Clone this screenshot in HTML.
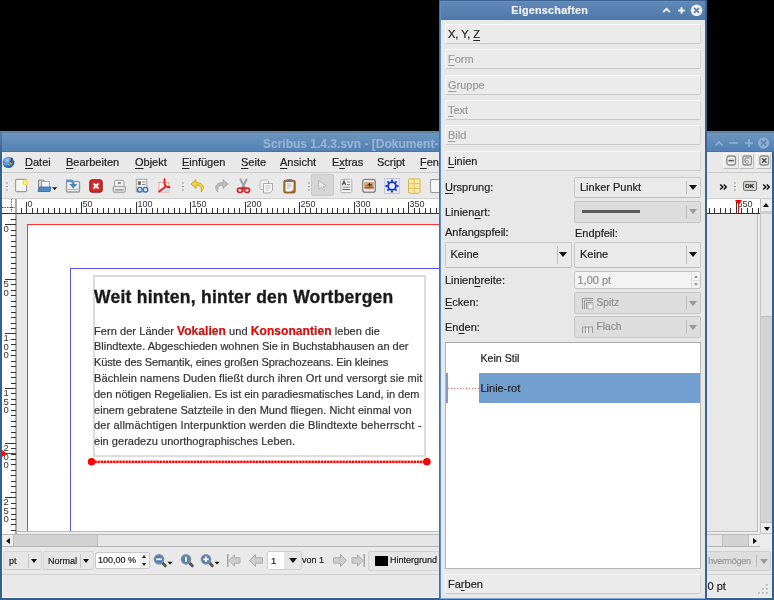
<!DOCTYPE html>
<html><head><meta charset="utf-8">
<style>
*{margin:0;padding:0;box-sizing:border-box}
html,body{width:774px;height:600px;overflow:hidden;background:#000;font-family:"Liberation Sans",sans-serif;font-size:11px;color:#222;-webkit-text-stroke:0.2px currentColor}
.a{position:absolute}
u{text-decoration:underline;text-decoration-thickness:1px;text-underline-offset:1.5px}
.t{position:absolute;white-space:nowrap;line-height:1}
/* main window */
#main{left:0;top:131px;width:774px;height:469px;background:#e9e9e9;border-left:2px solid #33608f;border-right:2px solid #33608f;border-bottom:2px solid #33608f;box-shadow:inset 1px -1px 0 #f7f5f1}
#mtitle{left:0;top:131px;width:774px;height:21px;background:linear-gradient(#7097c1,#5180b2)}
.mi{position:absolute;top:157px;font-size:11px;color:#222;line-height:1}
.hl{position:absolute;height:1px;background:#cbcbcb}
.btn{position:absolute;background:#e9e9e9;border:1px solid #d4d4d4;border-radius:2px}
/* properties */
#props{left:439px;top:0;width:268px;height:600px;background:#e9e9e9;border:2px solid #4a74a4;border-top:0;border-bottom:2px solid #4a74a4}
#ptitle{left:439px;top:0;width:268px;height:20px;background:linear-gradient(#6b93c1,#4e79aa);border-radius:3px 3px 0 0}
.pb{position:absolute;left:445px;width:256px;height:20px;background:#ebebeb;border:1px solid #f6f6f6;border-bottom-color:#c9c9c9;border-right-color:#d6d6d6;border-radius:2px;box-shadow:inset 0 0 0 0 #000}
.pb span{position:absolute;left:2px;top:3.5px;line-height:1;white-space:nowrap}
.dcombo{background:#dddddd !important;border-color:#c6c6c6 !important}
.dis{color:#999}
.lbl{position:absolute;left:445px;font-size:11px;color:#222;line-height:1}
.combo{position:absolute;background:#eaeaea;border:1px solid #c8c8c8;border-bottom-color:#bcbcbc;border-radius:2px}
.combo .sep{position:absolute;top:3px;bottom:3px;width:1px;background:#bdbdbd}
.arr{position:absolute;width:0;height:0;border-left:4px solid transparent;border-right:4px solid transparent;border-top:5px solid #111}
</style></head><body>
<body><div id="wrap" style="position:absolute;left:0;top:0;width:774px;height:600px;will-change:transform">
<!-- MAIN WINDOW -->
<div id="main" class="a"></div>
<div id="mtitle" class="a"></div>
<div class="a" style="left:0;top:131px;width:774px;height:1px;background:#6a87a6"></div>
<div class="a" style="left:0;top:132px;width:774px;height:1px;background:#62809f"></div>
<div class="a" style="left:0;top:151px;width:774px;height:1px;background:#4875a8"></div>
<div class="a" style="left:0;top:132px;width:2px;height:20px;background:linear-gradient(#5e7fa3,#3d6692)"></div>
<div class="t" style="left:263px;top:137.5px;font-weight:bold;font-size:12px;color:#98b4d6;-webkit-text-stroke:0.1px #98b4d6">Scribus 1.4.3.svn - [Dokument-1]</div>
<svg class="a" style="left:705px;top:131px" width="69" height="21" viewBox="0 0 69 21"><path d="M10.5 14.5 L14 11 L17.5 14.5" fill="none" stroke="#8fb0d4" stroke-width="1.7"/><path d="M24.5 12 H33" stroke="#8fb0d4" stroke-width="1.7"/><path d="M40 12 H48 M44 8 V16" stroke="#8fb0d4" stroke-width="1.7"/><circle cx="58.6" cy="12" r="5.6" fill="#8fb0d4"/><path d="M56 9.4 L61.2 14.6 M61.2 9.4 L56 14.6" stroke="#5d86b6" stroke-width="1.6"/></svg>
<div class="hl" style="left:2px;top:172px;width:770px"></div>
<svg class="a" style="left:2px;top:156px" width="14" height="14" viewBox="0 0 14 14"><defs><radialGradient id="gl" cx="0.4" cy="0.3" r="0.75"><stop offset="0" stop-color="#a8d0f0"/><stop offset="0.55" stop-color="#3a7fc0"/><stop offset="1" stop-color="#1d5a98"/></radialGradient></defs><circle cx="6.3" cy="6.4" r="5.7" fill="url(#gl)"/><path d="M1.5 7.5 Q5 10 11 7" fill="none" stroke="#9cc4e6" stroke-width="1" opacity="0.7"/><path d="M10.3 1.8 L7.6 8.8" stroke="#3a3a3a" stroke-width="1.3"/><path d="M8.6 6.2 L7.3 9.8" stroke="#c8a54a" stroke-width="1.1"/><path d="M12 5 L11 9" stroke="#0e3560" stroke-width="1.5" opacity="0.6"/></svg>
<div class="mi" style="left:25px"><u>D</u>atei</div>
<div class="mi" style="left:66px"><u>B</u>earbeiten</div>
<div class="mi" style="left:135px"><u>O</u>bjekt</div>
<div class="mi" style="left:182px"><u>E</u>infügen</div>
<div class="mi" style="left:241px"><u>S</u>eite</div>
<div class="mi" style="left:280px"><u>A</u>nsicht</div>
<div class="mi" style="left:332px">E<u>x</u>tras</div>
<div class="mi" style="left:377px">Scr<u>i</u>pt</div>
<div class="mi" style="left:420px"><u>F</u>enster</div>
<div class="a" style="left:723px;top:153px;width:16px;height:16px;background:#ebebeb;border:1px solid #f8f8f8;border-right-color:#c6c6c6;border-bottom-color:#bdbdbd"></div>
<svg class="a" style="left:726px;top:155px" width="11" height="12"><rect x="0.9" y="1" width="8.6" height="9" rx="2.2" fill="none" stroke="#8c8c8c" stroke-width="1.3"/><path d="M2.6 5.6 H7.8" stroke="#555" stroke-width="1.6"/></svg>
<div class="a" style="left:739px;top:153px;width:15px;height:16px;background:#ebebeb;border:1px solid #f8f8f8;border-right-color:#c6c6c6;border-bottom-color:#bdbdbd"></div>
<svg class="a" style="left:742px;top:155px" width="11" height="12"><rect x="0.9" y="1" width="8.6" height="9" rx="1.8" fill="none" stroke="#8c8c8c" stroke-width="1.3"/><path d="M3 7.5 V4 Q3 3 4 3 H7.5" fill="none" stroke="#777" stroke-width="1"/><circle cx="5" cy="7" r="1.5" fill="#f2f2f2" stroke="#888" stroke-width="0.8"/></svg>
<div class="a" style="left:756px;top:153px;width:15px;height:16px;background:#ebebeb;border:1px solid #f8f8f8;border-right-color:#c6c6c6;border-bottom-color:#bdbdbd"></div>
<svg class="a" style="left:759px;top:155px" width="11" height="12"><rect x="0.9" y="1" width="8.6" height="9" rx="1.8" fill="none" stroke="#8c8c8c" stroke-width="1.3"/><path d="M3 3.3 L7.4 7.7 M7.4 3.3 L3 7.7" stroke="#4a4a4a" stroke-width="1.5"/></svg>
<div class="hl" style="left:2px;top:198px;width:770px;background:#d0d0d0"></div>
<svg class="a" style="left:5px;top:180px" width="5" height="14"><g fill="#fafafa"><circle cx="2.7" cy="3.7" r="0.9"/><circle cx="2.7" cy="7.2" r="0.9"/><circle cx="2.7" cy="10.7" r="0.9"/></g><g fill="#8e8e8e"><circle cx="2" cy="3" r="0.85"/><circle cx="2" cy="6.5" r="0.85"/><circle cx="2" cy="10" r="0.85"/></g></svg>
<svg class="a" style="left:181px;top:180px" width="5" height="14"><g fill="#fafafa"><circle cx="2.7" cy="3.7" r="0.9"/><circle cx="2.7" cy="7.2" r="0.9"/><circle cx="2.7" cy="10.7" r="0.9"/></g><g fill="#8e8e8e"><circle cx="2" cy="3" r="0.85"/><circle cx="2" cy="6.5" r="0.85"/><circle cx="2" cy="10" r="0.85"/></g></svg>
<svg class="a" style="left:307px;top:180px" width="5" height="14"><g fill="#fafafa"><circle cx="2.7" cy="3.7" r="0.9"/><circle cx="2.7" cy="7.2" r="0.9"/><circle cx="2.7" cy="10.7" r="0.9"/></g><g fill="#8e8e8e"><circle cx="2" cy="3" r="0.85"/><circle cx="2" cy="6.5" r="0.85"/><circle cx="2" cy="10" r="0.85"/></g></svg>
<svg class="a" style="left:733px;top:180px" width="5" height="14"><g fill="#fafafa"><circle cx="2.7" cy="3.7" r="0.9"/><circle cx="2.7" cy="7.2" r="0.9"/><circle cx="2.7" cy="10.7" r="0.9"/></g><g fill="#8e8e8e"><circle cx="2" cy="3" r="0.85"/><circle cx="2" cy="6.5" r="0.85"/><circle cx="2" cy="10" r="0.85"/></g></svg>
<svg class="a" style="left:14px;top:178px" width="16" height="16"><rect x="1.6" y="1.4" width="11" height="12.2" rx="1" fill="#f4f4f4" stroke="#9a9a9a" stroke-width="1.1"/><circle cx="11.2" cy="4.4" r="2.9" fill="#efe84a"/><circle cx="11.2" cy="4.4" r="1.3" fill="#fffbb0"/></svg>
<svg class="a" style="left:37px;top:178px" width="22" height="16"><path d="M1.5 13 V2 H6.5 L8 3.5 H9.5 V8" fill="#cfcfcf" stroke="#8a8a8a"/><rect x="4.5" y="3.5" width="8" height="6" fill="#f6f6f6" stroke="#9a9a9a" stroke-width="0.8"/><path d="M5 9.5 H6.5" stroke="#bbb"/><path d="M2.5 9 H14 L13 13.5 H1 Z" fill="#5289c8" stroke="#3a6ca8" stroke-width="0.9"/><path d="M15.2 9.3 H20.2 L17.7 12 Z" fill="#111"/></svg>
<svg class="a" style="left:65px;top:178px" width="16" height="16"><rect x="1.5" y="3.5" width="13" height="10.5" rx="1.2" fill="#f2f2f2" stroke="#9a9a9a" stroke-width="1.4"/><path d="M2.5 11.5 H13.5" stroke="#b5b5b5" stroke-width="1.2"/><path d="M1 2.8 H5.5 Q8.3 2.8 8.3 6.5" fill="none" stroke="#5a92c8" stroke-width="2.6"/><path d="M4.3 6 H12.3 L8.3 10.5 Z" fill="#4a86c0"/></svg>
<svg class="a" style="left:89px;top:179px" width="15" height="15"><rect x="0.8" y="0.8" width="12.4" height="12.4" rx="2" fill="#d42a2a" stroke="#8e1414"/><path d="M4.5 4.5 L9.5 9.5 M9.5 4.5 L4.5 9.5" stroke="#fff" stroke-width="1.8"/></svg>
<svg class="a" style="left:112px;top:178px" width="15" height="16"><rect x="2.5" y="2.3" width="9.5" height="6.5" rx="1.2" fill="#f2f2f2" stroke="#9c9c9c" stroke-width="1"/><path d="M5.8 5 H8.8" stroke="#7a7a7a" stroke-width="1.6"/><rect x="1.3" y="8.3" width="12" height="6" rx="1.2" fill="#e2e2e2" stroke="#9a9a9a" stroke-width="1.1"/><path d="M3 11.8 H11.5" stroke="#8a8a8a" stroke-width="1.2"/><path d="M3 10.3 H11.5" stroke="#fafafa" stroke-width="0.8"/></svg>
<svg class="a" style="left:135px;top:178px" width="15" height="16"><rect x="1.3" y="1.3" width="10.5" height="12.5" fill="#f6f6f6" stroke="#a5a5a5" stroke-width="1"/><rect x="2.8" y="3.3" width="3.2" height="3.6" fill="#6e6e6e"/><path d="M7 4 H10.5 M7 6.5 H10.5" stroke="#8a8a8a" stroke-width="1"/><path d="M2.5 9 H10.5" stroke="#d0d0d0" stroke-width="1"/><circle cx="4.8" cy="11.7" r="2.3" fill="#dfe9f5" stroke="#3f74b8" stroke-width="1.4"/><circle cx="10.5" cy="11.7" r="2.3" fill="#dfe9f5" stroke="#3f74b8" stroke-width="1.4"/><path d="M7 11.7 H8.3" stroke="#3f74b8" stroke-width="1.2"/></svg>
<svg class="a" style="left:155px;top:176px" width="18" height="18"><rect x="4" y="6.5" width="9.8" height="9.6" fill="#f4f4f4" stroke="#e0a0a0" stroke-width="0.9"/><path d="M7.5 16 Q11 11.5 13.8 11.5 V16 Z" fill="#c8dcea"/><path d="M9.6 3.2 Q9.2 8.5 10.8 10.5 L14.6 11.3 M10.8 10.5 Q7.5 13 4.2 15.6" fill="none" stroke="#f01818" stroke-width="1.9" stroke-linecap="round"/></svg>
<svg class="a" style="left:190px;top:178px" width="16" height="16"><path d="M6 1.5 L1 6 L6 10.5 V7.5 C10 7 12 9 11 14 C14.5 11 15 5 6 4.5 Z" fill="#f0d23a" stroke="#c4a21a" stroke-width="0.8"/></svg>
<svg class="a" style="left:213px;top:178px" width="16" height="16"><path d="M10 1.5 L15 6 L10 10.5 V7.5 C6 7 4 9 5 14 C1.5 11 1 5 10 4.5 Z" fill="#bdbdbd" stroke="#a5a5a5" stroke-width="0.8"/></svg>
<svg class="a" style="left:236px;top:178px" width="15" height="16"><path d="M4.5 1.5 L8.8 10 M10.5 1.5 L6.2 10" stroke="#a0a0a0" stroke-width="2" stroke-linecap="round"/><path d="M7.5 9.5 L5 11" stroke="#c02020" stroke-width="1.5"/><path d="M7.5 9.5 L10 11" stroke="#c02020" stroke-width="1.5"/><ellipse cx="4" cy="12.3" rx="2.6" ry="2.2" fill="none" stroke="#d82020" stroke-width="1.7"/><ellipse cx="11" cy="12.3" rx="2.6" ry="2.2" fill="none" stroke="#d82020" stroke-width="1.7"/></svg>
<svg class="a" style="left:259px;top:179px" width="15" height="15"><rect x="1" y="1" width="8.5" height="9.5" rx="1" fill="#efefef" stroke="#bdbdbd"/><path d="M4.5 4.5 H13.5 V11.5 L11 14 H4.5 Z" fill="#f4f4f4" stroke="#ababab"/><path d="M6.5 7 H11.5 M6.5 9 H11.5 M6.5 11 H9.5" stroke="#c8c8c8"/></svg>
<svg class="a" style="left:282px;top:178px" width="15" height="16"><rect x="1.8" y="2.3" width="11.4" height="12.7" rx="1.5" fill="#a46f28" stroke="#7a5018" stroke-width="0.8"/><path d="M3.5 4 H11.5 V11.5 L9 13.5 H3.5 Z" fill="#f4f4f4"/><rect x="4.8" y="1" width="5.4" height="2.8" rx="1" fill="#777"/><path d="M5 6 H9 M5 8 H10 M5 10 H8" stroke="#b5b5b5"/></svg>
<div class="a" style="left:311px;top:174px;width:23px;height:22px;background:#d6d6d6;border:1px solid #c8c8c8;border-radius:2px"></div>
<svg class="a" style="left:315px;top:178px" width="15" height="15"><path d="M3.5 2.5 L11.5 8 L8 8.5 L10 12 L8.5 12.8 L6.5 9.3 L3.8 11.5 Z" fill="#e8e8e8" stroke="#b5b5b5" stroke-width="0.9"/></svg>
<svg class="a" style="left:339px;top:178px" width="15" height="16"><rect x="1.8" y="1.3" width="11" height="13.3" rx="1.3" fill="#f7f7f7" stroke="#b0b0b0" stroke-width="1"/><path d="M3.3 7 L5 2.8 L6.6 7 M3.9 5.6 H6" fill="none" stroke="#555" stroke-width="1.2"/><path d="M7.8 4 H11 M7.8 6.5 H11" stroke="#8a8a8a" stroke-width="1"/><path d="M3.3 9.2 H11.3" stroke="#b5b5b5" stroke-width="1.6"/><path d="M3.3 11.6 H11.3" stroke="#555" stroke-width="1"/></svg>
<svg class="a" style="left:361px;top:178px" width="16" height="16"><rect x="1.7" y="1.6" width="12.6" height="12.6" rx="2.2" fill="#f4f4f4" stroke="#8a8a8a" stroke-width="1.5"/><rect x="3.5" y="4" width="9" height="6.5" rx="0.8" fill="#b78a5a"/><rect x="3.5" y="4" width="9" height="3" fill="#c9a070"/><rect x="3.5" y="9" width="9" height="1.5" fill="#d24a2a"/><path d="M6.5 6.8 H11 M8.5 5 V8.5" stroke="#3a2a20" stroke-width="1"/><circle cx="5" cy="5.3" r="0.9" fill="#c8e040"/><path d="M3.5 11.8 H12.5" stroke="#cfcfcf" stroke-width="0.8"/></svg>
<svg class="a" style="left:384px;top:178px" width="16" height="16"><rect x="0.5" y="0.5" width="15" height="15" fill="none" stroke="#7c95e0" stroke-dasharray="1 1" stroke-width="0.8"/><circle cx="8" cy="8" r="3.9" fill="none" stroke="#1a3ad8" stroke-width="1.9"/><path d="M8 1.5 V3.8 M8 12.2 V14.5 M1.5 8 H3.8 M12.2 8 H14.5 M3.4 3.4 L5 5 M11 11 L12.6 12.6 M12.6 3.4 L11 5 M5 11 L3.4 12.6" stroke="#1a3ad8" stroke-width="1.8"/></svg>
<svg class="a" style="left:407px;top:178px" width="15" height="16"><rect x="1.5" y="0.8" width="11.5" height="14.4" rx="1.5" fill="#f8eba8" stroke="#d2b44a"/><path d="M7.25 1 V15 M1.5 5.6 H13 M1.5 10.4 H13" stroke="#d8bd5a" stroke-width="0.9"/></svg>
<div class="a" style="left:430px;top:179px;width:9px;height:14px;background:#f6f6f6;border:1px solid #999;border-right:0;border-radius:2px 0 0 2px"></div>
<svg class="a" style="left:719px;top:183px" width="10" height="8"><path d="M1.2 1.5 L3.8 4 L1.2 6.5 M4.7 1.5 L7.3 4 L4.7 6.5" fill="none" stroke="#111" stroke-width="1.5"/></svg>
<svg class="a" style="left:762px;top:183px" width="10" height="8"><path d="M1.2 1.5 L3.8 4 L1.2 6.5 M4.7 1.5 L7.3 4 L4.7 6.5" fill="none" stroke="#111" stroke-width="1.5"/></svg>
<div class="a" style="left:743px;top:181px;width:14px;height:10px;background:#d4d4d0;border:1px solid #777;border-radius:2px"></div>
<div class="t" style="left:745px;top:183px;font-weight:bold;font-size:6px;color:#222">OK</div>
<div class="a" style="left:2px;top:199px;width:758px;height:15px;background:#fff"></div>
<div class="a" style="left:2px;top:214px;width:15px;height:320px;background:#fff"></div>
<div class="a" style="left:17px;top:214px;width:743px;height:317px;background:#e8e8e8;overflow:hidden"><div class="a" style="left:10px;top:10px;width:640px;height:400px;background:#fff;border-left:1px solid #f33;border-top:1px solid #f33"></div><div class="a" style="left:53px;top:54px;width:560px;height:400px;border-left:1px solid #55f;border-top:1px solid #55f"></div></div>
<div class="a" style="left:757px;top:214px;width:1px;height:317px;background:#c6c6c6"></div>
<svg class="a" style="left:0;top:0" width="774" height="600"><path d="M2 213.5 H760" stroke="#333" stroke-width="1"/><path d="M16 199 V534" stroke="#555" stroke-width="1"/><path d="M2 207.5 H15 M11.5 199 V212" stroke="#555" stroke-width="1" stroke-dasharray="1.5 1"/><path d="M21.5 208 V213 M26.5 202 V213 M32.5 208 V213 M37.5 208 V213 M43.5 208 V213 M48.5 208 V213 M54.5 208 V213 M59.5 208 V213 M65.5 208 V213 M70.5 208 V213 M76.5 208 V213 M81.5 202 V213 M86.5 208 V213 M92.5 208 V213 M97.5 208 V213 M103.5 208 V213 M108.5 208 V213 M114.5 208 V213 M119.5 208 V213 M125.5 208 V213 M130.5 208 V213 M136.5 202 V213 M141.5 208 V213 M146.5 208 V213 M152.5 208 V213 M157.5 208 V213 M163.5 208 V213 M168.5 208 V213 M174.5 208 V213 M179.5 208 V213 M185.5 208 V213 M190.5 202 V213 M196.5 208 V213 M201.5 208 V213 M206.5 208 V213 M212.5 208 V213 M217.5 208 V213 M223.5 208 V213 M228.5 208 V213 M234.5 208 V213 M239.5 208 V213 M245.5 202 V213 M250.5 208 V213 M256.5 208 V213 M261.5 208 V213 M267.5 208 V213 M272.5 208 V213 M277.5 208 V213 M283.5 208 V213 M288.5 208 V213 M294.5 208 V213 M299.5 202 V213 M305.5 208 V213 M310.5 208 V213 M316.5 208 V213 M321.5 208 V213 M327.5 208 V213 M332.5 208 V213 M337.5 208 V213 M343.5 208 V213 M348.5 208 V213 M354.5 202 V213 M359.5 208 V213 M365.5 208 V213 M370.5 208 V213 M376.5 208 V213 M381.5 208 V213 M387.5 208 V213 M392.5 208 V213 M398.5 208 V213 M403.5 208 V213 M408.5 202 V213 M414.5 208 V213 M419.5 208 V213 M425.5 208 V213 M430.5 208 V213 M436.5 208 V213 M441.5 208 V213 M447.5 208 V213 M452.5 208 V213 M458.5 208 V213 M463.5 202 V213 M468.5 208 V213 M474.5 208 V213 M479.5 208 V213 M485.5 208 V213 M490.5 208 V213 M496.5 208 V213 M501.5 208 V213 M507.5 208 V213 M512.5 208 V213 M518.5 202 V213 M523.5 208 V213 M528.5 208 V213 M534.5 208 V213 M539.5 208 V213 M545.5 208 V213 M550.5 208 V213 M556.5 208 V213 M561.5 208 V213 M567.5 208 V213 M572.5 202 V213 M578.5 208 V213 M583.5 208 V213 M589.5 208 V213 M594.5 208 V213 M599.5 208 V213 M605.5 208 V213 M610.5 208 V213 M616.5 208 V213 M621.5 208 V213 M627.5 202 V213 M632.5 208 V213 M638.5 208 V213 M643.5 208 V213 M649.5 208 V213 M654.5 208 V213 M659.5 208 V213 M665.5 208 V213 M670.5 208 V213 M676.5 208 V213 M681.5 202 V213 M687.5 208 V213 M692.5 208 V213 M698.5 208 V213 M703.5 208 V213 M709.5 208 V213 M714.5 208 V213 M720.5 208 V213 M725.5 208 V213 M730.5 208 V213 M736.5 202 V213 M741.5 208 V213 M747.5 208 V213 M752.5 208 V213 M758.5 208 V213" stroke="#333" stroke-width="1"/><text x="27.5" y="206.6" font-size="9" fill="#333" font-family="Liberation Sans">0</text><text x="82.5" y="206.6" font-size="9" fill="#333" font-family="Liberation Sans">50</text><text x="137.5" y="206.6" font-size="9" fill="#333" font-family="Liberation Sans">100</text><text x="191.5" y="206.6" font-size="9" fill="#333" font-family="Liberation Sans">150</text><text x="246.5" y="206.6" font-size="9" fill="#333" font-family="Liberation Sans">200</text><text x="300.5" y="206.6" font-size="9" fill="#333" font-family="Liberation Sans">250</text><text x="355.5" y="206.6" font-size="9" fill="#333" font-family="Liberation Sans">300</text><text x="409.5" y="206.6" font-size="9" fill="#333" font-family="Liberation Sans">350</text><text x="464.5" y="206.6" font-size="9" fill="#333" font-family="Liberation Sans">400</text><text x="519.5" y="206.6" font-size="9" fill="#333" font-family="Liberation Sans">450</text><text x="573.5" y="206.6" font-size="9" fill="#333" font-family="Liberation Sans">500</text><text x="628.5" y="206.6" font-size="9" fill="#333" font-family="Liberation Sans">550</text><text x="682.5" y="206.6" font-size="9" fill="#333" font-family="Liberation Sans">600</text><text x="737.5" y="206.6" font-size="9" fill="#333" font-family="Liberation Sans">650</text><path d="M11 219.5 H16 M5 224.5 H16 M11 230.5 H16 M11 235.5 H16 M11 241.5 H16 M11 246.5 H16 M11 252.5 H16 M11 257.5 H16 M11 263.5 H16 M11 268.5 H16 M11 273.5 H16 M5 279.5 H16 M11 284.5 H16 M11 290.5 H16 M11 295.5 H16 M11 301.5 H16 M11 306.5 H16 M11 312.5 H16 M11 317.5 H16 M11 323.5 H16 M11 328.5 H16 M5 333.5 H16 M11 339.5 H16 M11 344.5 H16 M11 350.5 H16 M11 355.5 H16 M11 361.5 H16 M11 366.5 H16 M11 372.5 H16 M11 377.5 H16 M11 383.5 H16 M5 388.5 H16 M11 393.5 H16 M11 399.5 H16 M11 404.5 H16 M11 410.5 H16 M11 415.5 H16 M11 421.5 H16 M11 426.5 H16 M11 432.5 H16 M11 437.5 H16 M5 443.5 H16 M11 448.5 H16 M11 454.5 H16 M11 459.5 H16 M11 464.5 H16 M11 470.5 H16 M11 475.5 H16 M11 481.5 H16 M11 486.5 H16 M11 492.5 H16 M5 497.5 H16 M11 503.5 H16 M11 508.5 H16 M11 514.5 H16 M11 519.5 H16 M11 524.5 H16 M11 530.5 H16" stroke="#333" stroke-width="1"/><text x="3.6" y="231.9" font-size="9.5" fill="#333" font-family="Liberation Sans">0</text><text x="3.6" y="286.9" font-size="9.5" fill="#333" font-family="Liberation Sans">5</text><text x="3.6" y="295.5" font-size="9.5" fill="#333" font-family="Liberation Sans">0</text><text x="3.6" y="340.9" font-size="9.5" fill="#333" font-family="Liberation Sans">1</text><text x="3.6" y="349.5" font-size="9.5" fill="#333" font-family="Liberation Sans">0</text><text x="3.6" y="358.1" font-size="9.5" fill="#333" font-family="Liberation Sans">0</text><text x="3.6" y="395.9" font-size="9.5" fill="#333" font-family="Liberation Sans">1</text><text x="3.6" y="404.5" font-size="9.5" fill="#333" font-family="Liberation Sans">5</text><text x="3.6" y="413.1" font-size="9.5" fill="#333" font-family="Liberation Sans">0</text><text x="3.6" y="450.9" font-size="9.5" fill="#333" font-family="Liberation Sans">2</text><text x="3.6" y="459.5" font-size="9.5" fill="#333" font-family="Liberation Sans">0</text><text x="3.6" y="468.1" font-size="9.5" fill="#333" font-family="Liberation Sans">0</text><text x="3.6" y="504.9" font-size="9.5" fill="#333" font-family="Liberation Sans">2</text><text x="3.6" y="513.5" font-size="9.5" fill="#333" font-family="Liberation Sans">5</text><text x="3.6" y="522.1" font-size="9.5" fill="#333" font-family="Liberation Sans">0</text><path d="M738.5 200 V213" stroke="#f00" stroke-width="1"/><path d="M735 200 H742 L738.5 205 Z" fill="#f00"/><path d="M2 453.5 H16" stroke="#f00" stroke-width="1"/><path d="M2 450 V457 L7 453.5 Z" fill="#f00"/></svg>
<div class="a" style="left:93px;top:275px;width:333px;height:182px;border:2px solid #dcdcdc"></div>
<div class="t" style="left:94px;top:288.9px;font-weight:bold;font-size:17.5px;color:#1a1a1a;letter-spacing:0.25px;-webkit-text-stroke:0.35px #1a1a1a">Weit hinten, hinter den Wortbergen</div>
<div class="t" style="left:94px;top:325.3px;font-size:11px;color:#333;letter-spacing:0.066px;-webkit-text-stroke:0.2px #333">Fern der Länder <b style="color:#f00;font-size:12px">Vokalien</b> und <b style="color:#f00;font-size:12px">Konsonantien</b> leben die</div>
<div class="t" style="left:94px;top:341.2px;font-size:11px;color:#333;letter-spacing:-0.008px;-webkit-text-stroke:0.2px #333">Blindtexte. Abgeschieden wohnen Sie in Buchstabhausen an der</div>
<div class="t" style="left:94px;top:357.0px;font-size:11px;color:#333;letter-spacing:-0.114px;-webkit-text-stroke:0.2px #333">Küste des Semantik, eines großen Sprachozeans. Ein kleines</div>
<div class="t" style="left:94px;top:372.9px;font-size:11px;color:#333;letter-spacing:0.097px;-webkit-text-stroke:0.2px #333">Bächlein namens Duden fließt durch ihren Ort und versorgt sie mit</div>
<div class="t" style="left:94px;top:388.7px;font-size:11px;color:#333;letter-spacing:-0.026px;-webkit-text-stroke:0.2px #333">den nötigen Regelialien. Es ist ein paradiesmatisches Land, in dem</div>
<div class="t" style="left:94px;top:404.6px;font-size:11px;color:#333;letter-spacing:0.053px;-webkit-text-stroke:0.2px #333">einem gebratene Satzteile in den Mund fliegen. Nicht einmal von</div>
<div class="t" style="left:94px;top:420.4px;font-size:11px;color:#333;letter-spacing:0.158px;-webkit-text-stroke:0.2px #333">der allmächtigen Interpunktion werden die Blindtexte beherrscht -</div>
<div class="t" style="left:94px;top:436.2px;font-size:11px;color:#333;letter-spacing:0.027px;-webkit-text-stroke:0.2px #333">ein geradezu unorthographisches Leben.</div>
<svg class="a" style="left:80px;top:450px" width="360" height="24"><path d="M11.6 11.8 H346.9" stroke="#ff9a9a" stroke-width="2.8"/><path d="M11.6 11.8 H346.9" stroke="#f00" stroke-width="2.2" stroke-dasharray="2 1.1"/><circle cx="11.6" cy="11.7" r="3.8" fill="#f00"/><circle cx="346.9" cy="11.7" r="3.8" fill="#f00"/></svg>
<div class="a" style="left:757px;top:214px;width:3px;height:320px;background:#ececec"></div>
<div class="a" style="left:757px;top:214px;width:1px;height:318px;background:#bcbcbc"></div>
<div class="a" style="left:17px;top:531px;width:741px;height:1px;background:#bcbcbc"></div>
<div class="a" style="left:17px;top:532px;width:743px;height:2px;background:#ececec"></div>
<div class="a" style="left:760px;top:199px;width:12px;height:335px;background:#e6e6e6;border-left:1px solid #c4c4c4"></div>
<div class="a" style="left:761px;top:199px;width:11px;height:12px;background:#ededed"></div>
<div class="arr" style="left:763px;top:203px;border-width:0 3.5px 4px 3.5px;border-color:transparent transparent #111 transparent;border-style:solid"></div>
<div class="a" style="left:761px;top:211px;width:11px;height:3px;background:#cfcfcf"></div>
<div class="a" style="left:761px;top:316px;width:11px;height:207px;background:#d3d3d3;border-top:1px solid #bdbdbd;border-bottom:1px solid #bdbdbd"></div>
<div class="a" style="left:761px;top:523px;width:11px;height:11px;background:#ededed;border-bottom:1px solid #c4c4c4"></div>
<div class="arr" style="left:763.5px;top:527px;border-width:4px 3.5px 0 3.5px;border-top-color:#111"></div>
<div class="a" style="left:2px;top:534px;width:758px;height:13px;background:#e6e6e6;border-top:1px solid #b9b9b9;border-bottom:1px solid #b4b4b4"></div>
<div class="a" style="left:3px;top:535px;width:10px;height:11px;background:#ededed"></div>
<div class="arr" style="left:5.5px;top:537.5px;border-width:3px 4px 3px 0;border-color:transparent #111 transparent transparent;border-style:solid"></div>
<div class="a" style="left:13px;top:535px;width:85px;height:11px;background:#d3d3d3;border-left:1px solid #bcbcbc;border-right:1px solid #bcbcbc"></div>
<div class="a" style="left:722px;top:535px;width:27px;height:11px;background:#d3d3d3;border-left:1px solid #bcbcbc;border-right:1px solid #bcbcbc"></div>
<div class="a" style="left:749px;top:535px;width:10px;height:11px;background:#ededed"></div>
<div class="arr" style="left:752.5px;top:537.5px;border-width:3px 0 3px 4px;border-color:transparent transparent transparent #111;border-style:solid"></div>
<div class="a" style="left:760px;top:534px;width:12px;height:13px;background:#ececec"></div>
<div class="combo" style="left:3px;top:551px;width:39px;height:19px;background:#e6e6e6;border-color:#d6d6d6;border-bottom-color:#c8c8c8"><div class="t" style="left:5px;top:5px;font-size:9px;color:#222">pt</div><div class="a" style="left:23.5px;top:2px;width:1px;height:14px;background:#c4c4c4"></div><div class="arr" style="left:26.5px;top:7px;border-width:4px 3.5px 0 3.5px;border-top-color:#111"></div></div>
<div class="combo" style="left:43px;top:551px;width:51px;height:19px;background:#e6e6e6;border-color:#d6d6d6;border-bottom-color:#c8c8c8"><div class="t" style="left:4px;top:5px;font-size:9px;color:#222">Normal</div><div class="a" style="left:35.5px;top:2px;width:1px;height:14px;background:#c4c4c4"></div><div class="arr" style="left:38.5px;top:7px;border-width:4px 3.5px 0 3.5px;border-top-color:#111"></div></div>
<div class="a" style="left:95px;top:552px;width:55px;height:17px;background:#fff;border:1px solid #c8c8c8;border-radius:2px"></div>
<div class="a" style="left:140px;top:553px;width:9px;height:15px;background:#f0f0f0"></div>
<div class="t" style="left:98px;top:556px;font-size:9px;color:#222">100,00 %</div>
<div class="arr" style="left:142px;top:555px;border-width:0 2.5px 3px 2.5px;border-color:transparent transparent #222 transparent;border-style:solid"></div>
<div class="arr" style="left:142px;top:563px;border-width:3px 2.5px 0 2.5px;border-top-color:#222"></div>
<svg class="a" style="left:153px;top:553px" width="22" height="16"><path d="M8.5 9 L12.3 12.8" stroke="#555" stroke-width="3" stroke-linecap="round"/><circle cx="6" cy="6.3" r="4.6" fill="#4a7fc2" stroke="#8c8c8c" stroke-width="1.5"/><path d="M3.3 6.3 H8.7" stroke="#fff" stroke-width="1.8"/><path d="M14.5 8.8 H19.5 L17 11.6 Z" fill="#111"/></svg>
<svg class="a" style="left:180px;top:553px" width="22" height="16"><path d="M8.5 9 L12.3 12.8" stroke="#555" stroke-width="3" stroke-linecap="round"/><circle cx="6" cy="6.3" r="4.6" fill="#4a7fc2" stroke="#8c8c8c" stroke-width="1.5"/><path d="M6 3.8 V8.8" stroke="#fff" stroke-width="2"/></svg>
<svg class="a" style="left:200px;top:553px" width="22" height="16"><path d="M8.5 9 L12.3 12.8" stroke="#555" stroke-width="3" stroke-linecap="round"/><circle cx="6" cy="6.3" r="4.6" fill="#4a7fc2" stroke="#8c8c8c" stroke-width="1.5"/><path d="M3.3 6.3 H8.7 M6 3.6 V9" stroke="#fff" stroke-width="1.8"/><path d="M14.5 8.8 H19.5 L17 11.6 Z" fill="#111"/></svg>
<svg class="a" style="left:226px;top:553px" width="16" height="15"><path d="M1.8 1 V14" stroke="#9a9a9a" stroke-width="1.3"/><path d="M3 7.5 L8.5 1.8 V4.8 H14 V10.2 H8.5 V13.2 Z" fill="#cdcdcd" stroke="#adadad" stroke-width="1"/></svg>
<svg class="a" style="left:248px;top:553px" width="16" height="15"><path d="M1.5 7.5 L7.5 1.5 V4.8 H14.5 V10.2 H7.5 V13.5 Z" fill="#cdcdcd" stroke="#adadad" stroke-width="1"/></svg>
<div class="a" style="left:267px;top:551px;width:35px;height:19px;background:#e6e6e6;border:1px solid #cfcfcf;border-radius:2px"></div>
<div class="a" style="left:268px;top:552px;width:16px;height:17px;background:#fff"></div>
<div class="t" style="left:271px;top:556px;font-size:9.5px">1</div>
<div class="arr" style="left:289px;top:558px;border-width:5px 4px 0 4px"></div>
<div class="t" style="left:302px;top:556px;font-size:9px">von 1</div>
<svg class="a" style="left:332px;top:553px" width="16" height="15"><path d="M14.5 7.5 L8.5 1.5 V4.8 H1.5 V10.2 H8.5 V13.5 Z" fill="#cdcdcd" stroke="#adadad" stroke-width="1"/></svg>
<svg class="a" style="left:350px;top:553px" width="16" height="15"><path d="M14.2 1 V14" stroke="#9a9a9a" stroke-width="1.3"/><path d="M13 7.5 L7.5 1.8 V4.8 H2 V10.2 H7.5 V13.2 Z" fill="#cdcdcd" stroke="#adadad" stroke-width="1"/></svg>
<div class="combo" style="left:368px;top:551px;width:80px;height:20px;background:#e6e6e6;border-color:#d2d2d2"></div>
<div class="a" style="left:375px;top:556px;width:13px;height:10px;background:#000"></div>
<div class="t" style="left:390px;top:556px;font-size:9px">Hintergrund</div>
<div class="combo" style="left:700px;top:551px;width:71px;height:20px;background:#dedede;border-color:#cfcfcf"><div class="t" style="left:7.3px;top:5px;font-size:9px;color:#999;letter-spacing:-0.3px">hvermögen</div><div class="sep" style="left:55px"></div><div class="arr" style="left:59px;top:7px;border-width:5px 4px 0 4px;border-top-color:#999"></div></div>
<div class="a" style="left:2px;top:574px;width:770px;height:1px;background:#cfcfcf"></div>
<div class="t" style="left:707.5px;top:581.3px;font-size:11px">0 pt</div>
<svg class="a" style="left:756px;top:582px" width="14" height="14"><g fill="#fafafa"><circle cx="11.7" cy="3.7" r="0.9"/><circle cx="7.7" cy="7.7" r="0.9"/><circle cx="11.7" cy="7.7" r="0.9"/><circle cx="3.7" cy="11.7" r="0.9"/><circle cx="7.7" cy="11.7" r="0.9"/><circle cx="11.7" cy="11.7" r="0.9"/></g><g fill="#aaa"><circle cx="11" cy="3" r="0.9"/><circle cx="7" cy="7" r="0.9"/><circle cx="11" cy="7" r="0.9"/><circle cx="3" cy="11" r="0.9"/><circle cx="7" cy="11" r="0.9"/><circle cx="11" cy="11" r="0.9"/></g></svg>
<!-- PROPERTIES -->
<div class="a" style="left:439px;top:0;width:268px;height:600px;background:#3b6291"></div>
<div class="a" style="left:439px;top:1px;width:1px;height:598px;background:#4b6f98"></div>
<div class="a" style="left:440px;top:1px;width:265px;height:598px;background:#5b90cc"></div>
<div class="a" style="left:441px;top:598px;width:264px;height:1px;background:#7eaadc"></div>
<div class="a" style="left:441px;top:20px;width:264px;height:578px;background:#e8e8e8"></div>
<div class="a" style="left:441px;top:2px;width:264px;height:18px;background:linear-gradient(#6089b9,#4d78a9)"></div>
<div class="t" style="left:511.3px;top:5.1px;font-weight:bold;font-size:10.8px;letter-spacing:0.23px;color:#f0f0f0">Eigenschaften</div>
<svg class="a" style="left:655px;top:0" width="52" height="22" viewBox="0 0 52 22">
<path d="M8.2 12.2 L11.5 8.9 L14.8 12.2" fill="none" stroke="#f4f4f4" stroke-width="1.9"/>
<path d="M23.2 10.5 H29.8 M26.5 7.2 V13.8" stroke="#f4f4f4" stroke-width="1.9"/>
<circle cx="41.6" cy="10.3" r="5.8" fill="#f4f4f4"/>
<path d="M39.1 7.8 L44.1 12.8 M44.1 7.8 L39.1 12.8" stroke="#5a84b5" stroke-width="1.7"/>
</svg>
<div class="pb" style="top:24px"><span>X, Y, <u>Z</u></span></div>
<div class="pb dis" style="top:49px"><span><u>F</u>orm</span></div>
<div class="pb dis" style="top:75px"><span><u>G</u>ruppe</span></div>
<div class="pb dis" style="top:100px"><span><u>T</u>ext</span></div>
<div class="pb dis" style="top:125px"><span><u>B</u>ild</span></div>
<div class="pb" style="top:151px"><span><u>L</u>inien</span></div>
<div class="lbl" style="top:182.2px"><u>U</u>rsprung:</div>
<div class="lbl" style="top:206.6px">Linien<u>a</u>rt:</div>
<div class="lbl" style="top:227.2px">Anfangspfeil:</div>
<div class="lbl" style="left:575px;top:227.5px">Endpfeil:</div>
<div class="lbl" style="top:274.8px">Linien<u>b</u>reite:</div>
<div class="lbl" style="top:297.1px"><u>E</u>cken:</div>
<div class="lbl" style="top:322.3px">En<u>d</u>en:</div>

<div class="combo" style="left:574px;top:177px;width:127px;height:21px"><div class="t" style="left:5px;top:4.4px">Linker Punkt</div><div class="sep" style="left:111px"></div><div class="arr" style="left:113.8px;top:6.5px"></div></div>
<div class="combo dcombo" style="left:574px;top:201px;width:127px;height:22px"><div class="a" style="left:7px;top:8px;width:58px;height:2.5px;background:#5a5a5a"></div><div class="sep" style="left:111px"></div><div class="arr" style="left:113.8px;top:7px;border-top-color:#999"></div></div>
<div class="combo" style="left:445px;top:242px;width:127px;height:26px"><div class="t" style="left:4.5px;top:6.4px">Keine</div><div class="sep" style="left:110.5px"></div><div class="arr" style="left:113.3px;top:9px"></div></div>
<div class="combo" style="left:574px;top:242px;width:127px;height:26px"><div class="t" style="left:5px;top:6.4px">Keine</div><div class="sep" style="left:111px"></div><div class="arr" style="left:113.8px;top:9px"></div></div>
<div class="combo" style="left:574px;top:271px;width:127px;height:18px;background:#f3f3f3;border-color:#c2c2c2"><div class="t" style="left:2.5px;top:2.8px;color:#8d8d8d">1,00 pt</div><div class="a" style="left:116px;top:0;width:1px;height:16px;background:#dadada"></div><div class="a" style="left:117px;top:8px;width:8px;height:1px;background:#e0e0e0"></div><div class="arr" style="left:118.5px;top:2.5px;border-width:0 2.5px 3px 2.5px;border-color:transparent transparent #999 transparent;border-style:solid"></div><div class="arr" style="left:118.5px;top:11px;border-width:3px 2.5px 0 2.5px;border-top-color:#999"></div></div>
<div class="combo dcombo" style="left:574px;top:292px;width:127px;height:22px"><svg class="a" style="left:6px;top:4px" width="14" height="13"><path d="M1.5 12 V1.5 H12 M3.5 12 V3.5 H12 M5.5 12 V5.5 H12" fill="none" stroke="#9a9a9a" stroke-width="1"/><rect x="7" y="7" width="5" height="5" fill="#f0f0f0" stroke="#aaa" stroke-width="0.8"/></svg><div class="t" style="left:21.5px;top:5.2px;font-size:10.2px;color:#8d8d8d">Spitz</div><div class="sep" style="left:111px"></div><div class="arr" style="left:113.8px;top:7.5px;border-top-color:#999"></div></div>
<div class="combo dcombo" style="left:574px;top:316px;width:127px;height:22px"><svg class="a" style="left:6px;top:4.5px" width="14" height="12"><path d="M1.5 11 V5 H11.5 V11 M4.5 11 V5 M7.5 11 V5" fill="none" stroke="#9a9a9a" stroke-width="1"/><rect x="5" y="6" width="2" height="5" fill="#f2f2f2"/></svg><div class="t" style="left:21.5px;top:5.2px;font-size:10.2px;color:#8d8d8d">Flach</div><div class="sep" style="left:111px"></div><div class="arr" style="left:113.8px;top:7.5px;border-top-color:#999"></div></div>

<div class="a" style="left:445px;top:342px;width:256px;height:227px;background:#fff;border:1px solid #b7b7b7;border-top-color:#a9a9a9"></div>
<div class="t" style="left:480.5px;top:352.6px;font-size:10.6px">Kein Stil</div>
<div class="a" style="left:479px;top:373px;width:221px;height:30px;background:#729fcf"></div>
<div class="a" style="left:446px;top:373px;width:2px;height:30px;background:#729fcf"></div>
<div class="a" style="left:448px;top:388px;width:31px;height:1px;background:repeating-linear-gradient(90deg,#f66 0 1px,#fdd 1px 2px,transparent 2px 3px)"></div>
<div class="t" style="left:480.5px;top:383px">Linie-rot</div>
<div class="pb" style="top:574px"><span>Fa<u>r</u>ben</span></div>
</div></body></html>
